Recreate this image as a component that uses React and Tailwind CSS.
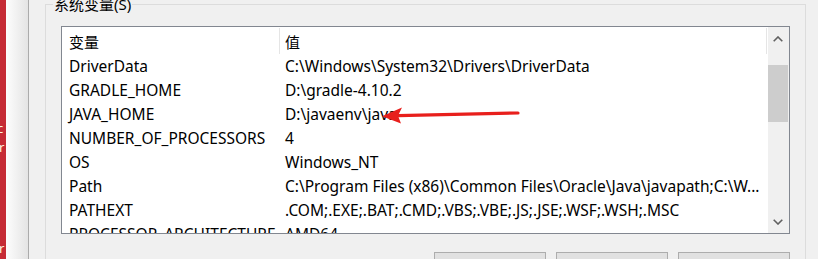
import React from 'react';

const rows = [
  { name: 'DriverData', value: 'C:\\Windows\\System32\\Drivers\\DriverData' },
  { name: 'GRADLE_HOME', value: 'D:\\gradle-4.10.2' },
  { name: 'JAVA_HOME', value: 'D:\\javaenv\\java' },
  { name: 'NUMBER_OF_PROCESSORS', value: '4' },
  { name: 'OS', value: 'Windows_NT' },
  { name: 'Path', value: 'C:\\Program Files (x86)\\Common Files\\Oracle\\Java\\javapath;C:\\W...' },
  { name: 'PATHEXT', value: '.COM;.EXE;.BAT;.CMD;.VBS;.VBE;.JS;.JSE;.WSF;.WSH;.MSC' },
  { name: 'PROCESSOR_ARCHITECTURE', value: 'AMD64' },
];

const Chevron = ({ up }) => (
  <svg width="10" height="6" viewBox="0 0 10 6" fill="none">
    <path
      d={up ? 'M0.7 5.3 L5 1 L9.3 5.3' : 'M0.7 0.7 L5 5 L9.3 0.7'}
      stroke="#606060"
      strokeWidth="1.6"
    />
  </svg>
);

const App = () => {
  return (
    <div className="relative flex w-[818px] h-[259px] overflow-hidden bg-[#f0f0f0] text-black font-[family-name:'Noto_Sans','Noto_Sans_CJK_SC',sans-serif]">
      {/* window behind, on the left */}
      <div className="w-[6px] shrink-0 bg-[#c62b35] overflow-hidden text-[13px] leading-[19px] text-[#fff4e0] pt-[119px]">
        <div className="-ml-[3px]">c</div>
        <div className="-ml-[1px]">r</div>
        <div className="h-[82px]" />
        <div className="-ml-[1px]">r</div>
      </div>
      <div className="w-[22px] shrink-0 bg-linear-to-r from-[#fdfdfd] to-[#e4e4e4]" />
      <div className="w-px shrink-0 bg-[#ababab]" />

      {/* dialog */}
      <div className="flex-1 pl-[16px] pr-[12px] pt-[4px]">
        <div className="flex flex-col h-full border-l border-t border-r border-[#dcdcdc]">
          <div className="-mt-[11px] ml-[7px] w-fit px-[1px] bg-[#f0f0f0] text-[15px] leading-[20px]">
            系统变量(S)
          </div>

          <div className="mt-[12px] ml-[15px] w-[729px] h-[208px] flex border border-[#828790] bg-white">
            <div className="w-[706px] flex flex-col overflow-hidden text-[15.5px]">
              <div className="flex h-[27px] shrink-0 text-[15px]">
                <div className="w-[217px] pl-[7px] leading-[30px]">变量</div>
                <div className="w-px mt-px h-[26px] bg-[#e5e5e5]" />
                <div className="w-[486px] pl-[5px] leading-[30px]">值</div>
                <div className="w-px mt-px h-[26px] bg-[#e5e5e5]" />
              </div>
              {rows.map((row) => (
                <div key={row.name} className="flex h-[24px] shrink-0 leading-[24px] whitespace-nowrap">
                  <div className="w-[218px] pl-[7px] overflow-hidden">{row.name}</div>
                  <div className="flex-1 min-w-0 pl-[5px]">{row.value}</div>
                </div>
              ))}
            </div>

            {/* scrollbar */}
            <div className="w-[21px] flex flex-col bg-[#f0f0f0]">
              <div className="h-[21px] flex items-center justify-center pt-[2px] pr-px">
                <Chevron up />
              </div>
              <div className="flex-1 pt-[17px]">
                <div className="w-[20px] h-[57px] bg-[#cdcdcd]" />
              </div>
              <div className="h-[21px] flex items-center justify-center pb-px pr-px">
                <Chevron />
              </div>
            </div>
          </div>

          <div className="mt-[18px] ml-[15px] w-[729px] flex justify-end gap-[10px]">
            <div className="w-[112px] h-[24px] border border-[#adadad] bg-[#e1e1e1]" />
            <div className="w-[112px] h-[24px] border border-[#adadad] bg-[#e1e1e1]" />
            <div className="w-[112px] h-[24px] border border-[#adadad] bg-[#e1e1e1]" />
          </div>
        </div>
      </div>

      {/* red annotation arrow */}
      <svg className="absolute left-0 top-0 pointer-events-none" width="818" height="259" viewBox="0 0 818 259">
        <path d="M398 115.6 L518 113" stroke="#e81f1c" strokeWidth="3.2" strokeLinecap="round" />
        <path d="M382 116.3 L402 107.5 L398 115.7 L401 123.5 Z" fill="#e81f1c" />
      </svg>
    </div>
  );
};

export default App;
